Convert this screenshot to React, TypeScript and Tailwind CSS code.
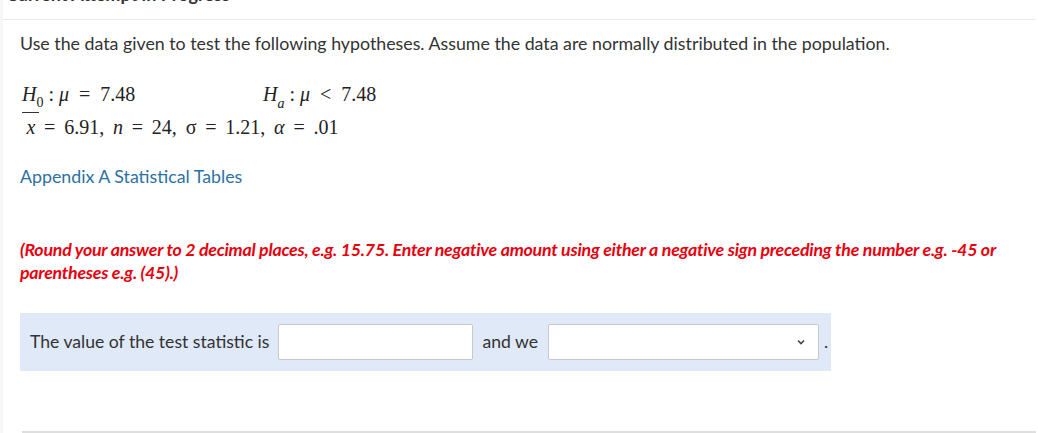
const LATO = "font-['Lato',_'Open_Sans',_sans-serif]"

function MathLine({ children }: { children: React.ReactNode }) {
  return (
    <div className="font-['Liberation_Serif',_'Times_New_Roman',_serif] text-[20px] leading-[26px] text-[#222] whitespace-pre">
      {children}
    </div>
  )
}

export default function App() {
  return (
    <div className={`${LATO} w-[1038px] h-[433px] overflow-hidden bg-white flex`}>
      <div className="w-[3px] bg-[#f6f6f6] shrink-0" />
      <div className="flex-1 flex flex-col pr-[2px]">
        {/* heading, scrolled mostly out of view */}
        <div className="h-[20px] overflow-hidden border-b border-[#ebebeb]">
          <p className="mt-[-16px] ml-[3px] text-[18px] leading-[20px] font-bold text-[#333]">
            Current Attempt in Progress
          </p>
        </div>

        <div className="px-[17px] flex flex-col">
          <p className="mt-[11px] text-[17.8px] leading-[24px] text-[#333]">
            Use the data given to test the following hypotheses. Assume the data are normally distributed in the population.
          </p>

          <div className="mt-[26px] ml-[2px] flex">
            <div className="w-[241px]">
              <MathLine>
                <i>H</i>
                <sub className="text-[14px] align-[-2px]">0</sub>
                {' : '}
                <i>μ</i>
                {'  =  7.48'}
              </MathLine>
            </div>
            <MathLine>
              <i>H</i>
              <sub className="text-[14px] align-[-3px]"><i>a</i></sub>
              {' : '}
              <i>μ</i>
              {'  <  7.48'}
            </MathLine>
          </div>

          <div className="mt-[7px] ml-[2px] [word-spacing:-0.6px]">
            <MathLine>
              <span className="relative inline-block">
                <span className="absolute left-0 right-[-4px] top-[-2px] border-t border-[#333]" />
                <i> x</i>
              </span>
              {'  =  6.91,  '}
              <i>n</i>
              {'  =  24,  σ  =  1.21,  '}
              <i>α</i>
              {'  =  .01'}
            </MathLine>
          </div>

          <a className="mt-[24px] text-[17.8px] leading-[24px] text-[#2b71a3] self-start">
            Appendix A Statistical Tables
          </a>

          <p className="mt-[50px] text-[17.8px] leading-[23px] font-bold italic text-[#e8000e] tracking-[-0.25px]">
            (Round your answer to 2 decimal places, e.g. 15.75. Enter negative amount using either a negative sign preceding the number e.g. -45 or parentheses e.g. (45).)
          </p>

          <div className="mt-[29px] w-[811px] h-[58px] bg-[#dfe9f8] flex items-center px-[10px] text-[17.6px] text-[#333] whitespace-nowrap">
            <span>The value of the test statistic is</span>
            <input className="ml-[9px] w-[195px] h-[36px] shrink-0 bg-white border border-[#c8c8c8] rounded-[2px]" />
            <span className="ml-[9px]">and we</span>
            <div className="ml-[10px] w-[271px] h-[36px] shrink-0 bg-white border border-[#c8c8c8] rounded-[2px] flex items-center justify-end pr-[12px]">
              <svg width="10" height="10" viewBox="0 0 10 10" fill="none">
                <path d="M2 3.5 L5 6.5 L8 3.5" stroke="#444" strokeWidth="1.6" />
              </svg>
            </div>
            <span className="ml-[5px]">.</span>
          </div>
        </div>

        <div className="mt-auto ml-[19px] border-b-2 border-[#dedede]" />
      </div>
    </div>
  )
}
